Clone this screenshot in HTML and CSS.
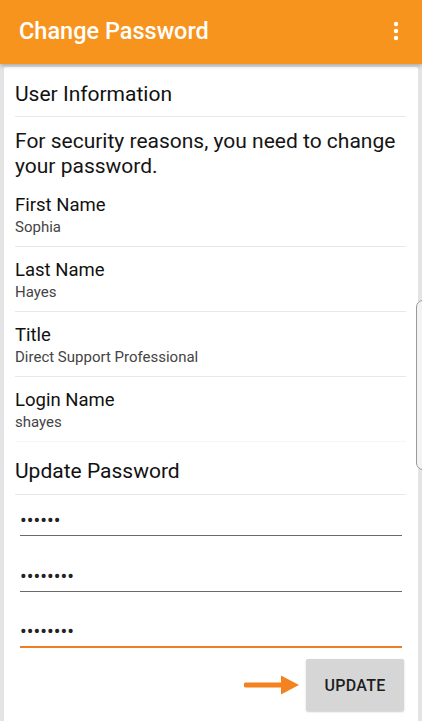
FILE: index.html
```html
<!DOCTYPE html>
<html lang="en">
<head>
<meta charset="utf-8">
<title>Change Password</title>
<link rel="stylesheet" href="styles.css">
</head>
<body>
<header class="appbar">
  <h1 class="appbar-title">Change Password</h1>
  <svg class="kebab" width="6" height="20" viewBox="0 0 6 20" aria-hidden="true">
    <circle cx="3" cy="3" r="2.2" fill="#fff"/>
    <circle cx="3" cy="10" r="2.2" fill="#fff"/>
    <circle cx="3" cy="17" r="2.2" fill="#fff"/>
  </svg>
</header>
<main class="page">
  <section class="card">
    <h2 class="section-title">User Information</h2>
    <p class="notice">For security reasons, you need to change your password.</p>
    <div class="field-row">
      <div class="label">First Name</div>
      <div class="value">Sophia</div>
    </div>
    <div class="field-row">
      <div class="label">Last Name</div>
      <div class="value">Hayes</div>
    </div>
    <div class="field-row">
      <div class="label">Title</div>
      <div class="value">Direct Support Professional</div>
    </div>
    <div class="field-row last">
      <div class="label">Login Name</div>
      <div class="value">shayes</div>
    </div>
    <div class="pw-section">
      <h2 class="section-title pw-title">Update Password</h2>
      <div class="inputs">
        <label class="input-field"><input type="password" value="aaaaaa" aria-label="Current password"></label>
        <label class="input-field"><input type="password" value="aaaaaaaa" aria-label="New password"></label>
        <label class="input-field focused"><input type="password" value="aaaaaaaa" aria-label="Confirm password"></label>
      </div>
      <div class="actions">
        <svg class="arrow" width="56" height="20" viewBox="0 0 56 20" aria-hidden="true">
          <line x1="2" y1="10" x2="40" y2="10" stroke="#F4821F" stroke-width="5" stroke-linecap="round"/>
          <polygon points="37,0.5 55,10 37,19.5" fill="#F4821F"/>
        </svg>
        <button class="btn-update" type="button">UPDATE</button>
      </div>
    </div>
  </section>
  <div class="edge-handle" aria-hidden="true"></div>
</main>
</body>
</html>
```
FILE: styles.css
```css
* { box-sizing: border-box; }
html, body {
  margin: 0;
  height: 100%;
}
body {
  font-family: Roboto, "Liberation Sans", Arial, sans-serif;
  background: #e4e4e4;
  overflow: hidden;
  color: #111;
}
.appbar {
  position: relative;
  z-index: 2;
  height: 64px;
  background: #F7941E;
  display: flex;
  align-items: center;
  justify-content: space-between;
  padding: 0 23px 2px 19px;
  box-shadow: 0 2px 4px rgba(0,0,0,0.25);
}
.appbar-title {
  margin: 0;
  color: #fff;
  font-size: 23.5px;
  font-weight: 500;
  letter-spacing: 0;
}
.kebab { display: block; margin-top: -1px; }
.page {
  position: relative;
  padding: 3px 4px 0;
}
.card {
  background: #fff;
  border-radius: 2px;
  padding: 0 12px 20px 11px;
  min-height: 700px;
}
.section-title {
  margin: 0;
  font-size: 21px;
  font-weight: 400;
  line-height: 24px;
  padding: 15px 0 10px;
  border-bottom: 1px solid #e8e8e8;
  color: #111;
}
.section-title.pw-title {
  padding: 17px 0 11px;
}
.notice {
  margin: 0;
  font-size: 21px;
  line-height: 25px;
  padding: 12px 0 3px;
  color: #151515;
}
.field-row {
  padding: 13px 0 10px;
  border-bottom: 1px solid #e8e8e8;
  display: flex;
  flex-direction: column;
  gap: 3px;
}
.field-row.last {
  border-bottom: 1px solid #f6f6f6;
}
.label {
  font-size: 18.5px;
  line-height: 20px;
  color: #111;
}
.value {
  font-size: 15px;
  line-height: 18px;
  color: #444;
}
.inputs {
  padding: 0 4px 0 5px;
  display: flex;
  flex-direction: column;
}
.input-field {
  display: block;
  margin-top: 27.5px;
  border-bottom: 1.5px solid #6a6a6a;
  padding-bottom: 3px;
}
.input-field:first-child { margin-top: 13px; }
.input-field.focused {
  border-bottom: 2px solid #EE7D23;
}
.input-field input {
  display: block;
  width: 100%;
  border: 0;
  outline: 0;
  padding: 0;
  margin: 0;
  background: transparent;
  font-family: Roboto, "Liberation Sans", Arial, sans-serif;
  font-size: 20px;
  letter-spacing: 0;
  height: 24px;
  color: #222;
}
.actions {
  display: flex;
  justify-content: flex-end;
  align-items: center;
  gap: 6px;
  padding: 11px 2px 0 0;
}
.arrow { display: block; }
.btn-update {
  width: 98px;
  height: 52px;
  border: 0;
  border-radius: 2px;
  background: #d6d6d6;
  box-shadow: 0 1px 2px rgba(0,0,0,0.2);
  font-family: Roboto, "Liberation Sans", Arial, sans-serif;
  font-size: 16px;
  font-weight: 500;
  color: #1e1e1e;
  letter-spacing: 0.3px;
}
.edge-handle {
  position: absolute;
  left: 416px;
  top: 236px;
  width: 14px;
  height: 170px;
  border: 1px solid #9a9a9a;
  border-radius: 10px;
  background: #f3f3f3;
}
```
